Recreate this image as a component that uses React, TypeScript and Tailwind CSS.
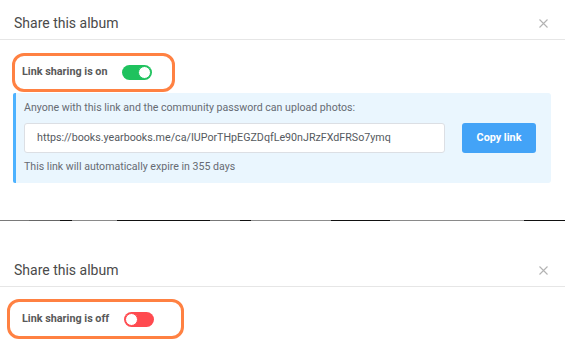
import React from "react";

function Toggle({ on }: { on: boolean }) {
  if (on) {
    return (
      <div className="flex h-[15px] w-[30px] items-center justify-end rounded-full bg-[#1fc25e] pr-[1px]">
        <div className="h-[13px] w-[13px] rounded-full border border-[#1fc25e] bg-white" />
      </div>
    );
  }
  return (
    <div className="flex h-[15px] w-[30px] items-center justify-start rounded-full bg-[#ff4a4f] pl-[1px]">
      <div className="h-[13px] w-[13px] rounded-full border border-[#ff4a4f] bg-white" />
    </div>
  );
}

function Header() {
  return (
    <div className="flex h-[40px] items-start justify-between border-b border-[#e6e6e6] pl-[14px] pr-[17px] pt-[14px]">
      <span className="text-[14px] leading-[18px] text-[#4a4a4a]">Share this album</span>
      <svg width="9" height="9" viewBox="0 0 9 9" className="mt-[5px]">
        <path d="M0.5 0.5 L8.5 8.5 M8.5 0.5 L0.5 8.5" stroke="#b3b3b3" strokeWidth="1.1" />
      </svg>
    </div>
  );
}

function LabelRow({ on }: { on: boolean }) {
  return (
    <div className="relative mt-[22px] flex h-[20px] items-center pl-[22px]">
      <div
        className={
          on
            ? "absolute left-[12px] top-[-9px] h-[39px] w-[163px] rounded-[12px] border-[3px] border-[#ff8142]"
            : "absolute left-[7px] top-[-10px] h-[40px] w-[177px] rounded-[12px] border-[3px] border-[#ff8142]"
        }
      />
      <span className="text-[10.8px] font-bold leading-[16px] text-[#595959]">
        {on ? "Link sharing is on" : "Link sharing is off"}
      </span>
      <div className={on ? "ml-[14px]" : "ml-[15px]"}>
        <Toggle on={on} />
      </div>
    </div>
  );
}

const segs: [number, string][] = [
  [29, "#7a7a7a"],
  [31, "#666666"],
  [12, "#111111"],
  [45, "#8a8a8a"],
  [93, "#111111"],
  [30, "#777777"],
  [11, "#111111"],
  [80, "#8c8c8c"],
  [59, "#111111"],
  [100, "#8a8a8a"],
  [34, "#9a9a9a"],
  [41, "#111111"],
];

export default function App() {
  return (
    <div className="h-[349px] w-[565px] overflow-hidden bg-white font-['Roboto',sans-serif]">
      <Header />
      <LabelRow on={true} />
      <div className="ml-[13px] mr-[14px] mt-[11px] h-[90px] rounded-r-[3px] rounded-l-[2px] border-l-[3px] border-[#4db2ff] bg-[#eaf6fe] pl-[8px] pr-[14px] pt-[7px]">
        <div className="text-[10.6px] leading-[16px] text-[#666b73]">
          Anyone with this link and the community password can upload photos:
        </div>
        <div className="mt-[7px] flex h-[30px] items-stretch">
          <div className="flex w-[421px] items-center rounded-[3px] border border-[#dcdfe4] bg-white pl-[12px] text-[10.7px] text-[#555a60]">
            https://books.yearbooks.me/ca/IUPorTHpEGZDqfLe90nJRzFXdFRSo7ymq
          </div>
          <button className="ml-[17px] flex w-[74px] items-center justify-center rounded-[3px] bg-[#43a3f7] text-[10.8px] font-bold text-white">
            Copy link
          </button>
        </div>
        <div className="mt-[6px] text-[10.6px] leading-[16px] text-[#666b73]">
          This link will automatically expire in 355 days
        </div>
      </div>
      <div className="mt-[37px] flex h-[1px]">
        {segs.map(([w, c], i) => (
          <div key={i} className="h-full" style={{ width: w, backgroundColor: c }} />
        ))}
      </div>
      <div className="h-[26px]" />
      <Header />
      <LabelRow on={false} />
    </div>
  );
}
